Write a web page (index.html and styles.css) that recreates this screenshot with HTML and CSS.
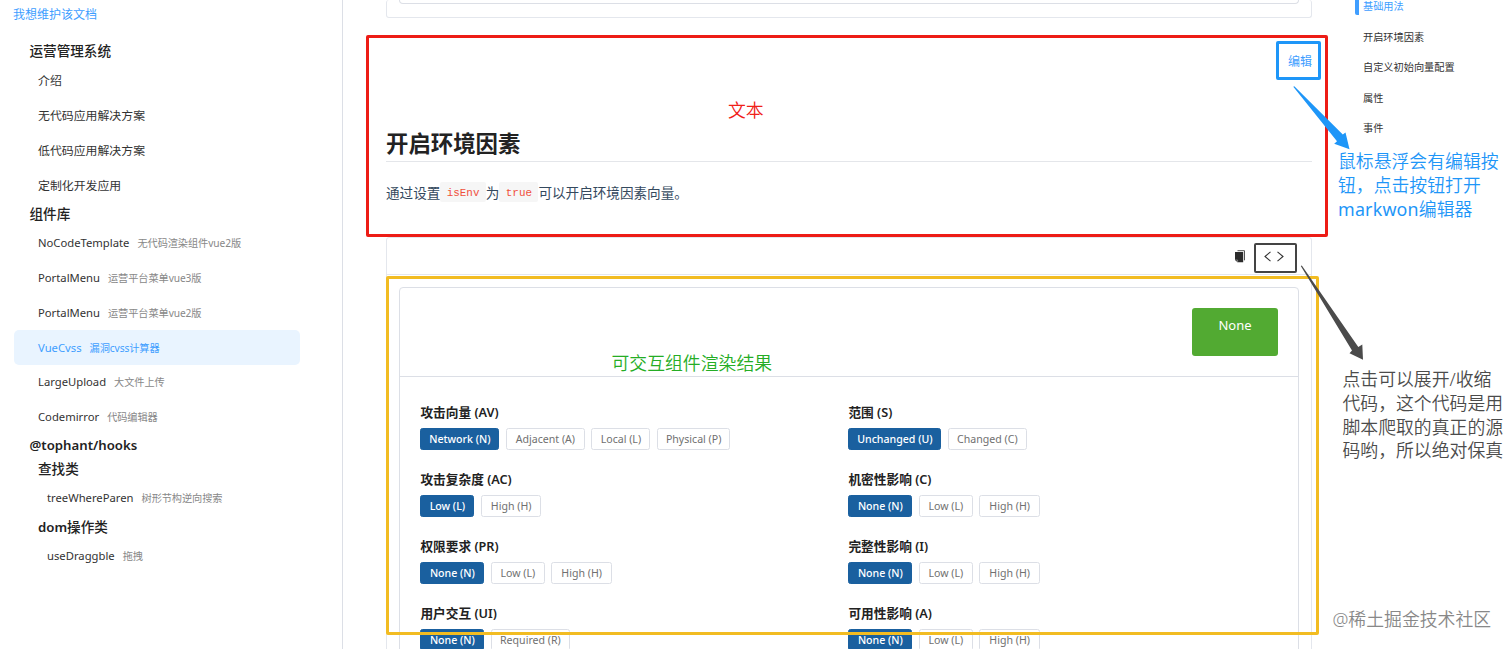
FILE: index.html
```html
<!DOCTYPE html>
<html lang="zh-CN">
<head>
    <meta charset="UTF-8">
    <meta name="viewport" content="width=device-width, initial-scale=1.0">
    <title>VueCvss 漏洞cvss计算器</title>
    <link rel="stylesheet" href="styles.css">
</head>
<body>
    <div class="layout">
        <aside class="sidebar">
            <a class="maintain">我想维护该文档</a>
            <nav class="menu">
                <div class="group">运营管理系统</div>
                <a class="item">介绍</a>
                <a class="item">无代码应用解决方案</a>
                <a class="item">低代码应用解决方案</a>
                <a class="item">定制化开发应用</a>
                <div class="group">组件库</div>
                <a class="item"><span class="name">NoCodeTemplate</span><small>无代码渲染组件vue2版</small></a>
                <a class="item"><span class="name">PortalMenu</span><small>运营平台菜单vue3版</small></a>
                <a class="item"><span class="name">PortalMenu</span><small>运营平台菜单vue2版</small></a>
                <a class="item active"><span class="name">VueCvss</span><small>漏洞cvss计算器</small></a>
                <a class="item"><span class="name">LargeUpload</span><small>大文件上传</small></a>
                <a class="item"><span class="name">Codemirror</span><small>代码编辑器</small></a>
                <div class="group latin">@tophant/hooks</div>
                <div class="group sub">查找类</div>
                <a class="item sub"><span class="name">treeWhereParen</span><small>树形节构逆向搜索</small></a>
                <div class="group sub"><span class="latin">dom</span>操作类</div>
                <a class="item sub"><span class="name">useDraggble</span><small>拖拽</small></a>
            </nav>
        </aside>

        <main class="content">
            <div class="demo demo-prev">
                <div class="prev-inner"></div>
            </div>

            <section class="doc">
                <a class="edit">编辑</a>
                <h2>开启环境因素</h2>
                <p>通过设置<code>isEnv</code>为<code>true</code>可以开启环境因素向量。</p>
            </section>

            <div class="demo">
                <div class="demo-bar">
                    <svg class="copy" width="12" height="13" viewBox="0 0 12 13">
                        <path d="M3.5 .7h7v9.6" fill="none" stroke="#555" stroke-width="1"/>
                        <path d="M1 2h8.2v10.3H3.6L1 10z" fill="#2b2b2b"/>
                        <path d="M1 10h2.6v2.3" fill="none" stroke="#999" stroke-width=".7"/>
                    </svg>
                    <svg class="code" width="20" height="11" viewBox="0 0 20 11">
                        <path d="M6.5 .8L1 5.5l5.5 4.7M13.5 .8L19 5.5l-5.5 4.7" fill="none" stroke="#333" stroke-width="1.1"/>
                    </svg>
                </div>
                <div class="cvss">
                    <div class="cvss-head">
                        <div class="score">None</div>
                    </div>
                    <div class="cvss-body">
                        <div class="metric">
                            <h4>攻击向量 (AV)</h4>
                            <div class="options"><button class="on w79">Network (N)</button><button class="w79">Adjacent (A)</button><button class="w59">Local (L)</button><button class="w73">Physical (P)</button></div>
                        </div>
                        <div class="metric">
                            <h4>范围 (S)</h4>
                            <div class="options"><button class="on w93">Unchanged (U)</button><button class="w79">Changed (C)</button></div>
                        </div>
                        <div class="metric">
                            <h4>攻击复杂度 (AC)</h4>
                            <div class="options"><button class="on w54">Low (L)</button><button class="w60">High (H)</button></div>
                        </div>
                        <div class="metric">
                            <h4>机密性影响 (C)</h4>
                            <div class="options"><button class="on w64">None (N)</button><button class="w54">Low (L)</button><button class="w60">High (H)</button></div>
                        </div>
                        <div class="metric">
                            <h4>权限要求 (PR)</h4>
                            <div class="options"><button class="on w64">None (N)</button><button class="w54">Low (L)</button><button class="w60">High (H)</button></div>
                        </div>
                        <div class="metric">
                            <h4>完整性影响 (I)</h4>
                            <div class="options"><button class="on w64">None (N)</button><button class="w54">Low (L)</button><button class="w60">High (H)</button></div>
                        </div>
                        <div class="metric">
                            <h4>用户交互 (UI)</h4>
                            <div class="options"><button class="on w64">None (N)</button><button class="w79">Required (R)</button></div>
                        </div>
                        <div class="metric">
                            <h4>可用性影响 (A)</h4>
                            <div class="options"><button class="on w64">None (N)</button><button class="w54">Low (L)</button><button class="w60">High (H)</button></div>
                        </div>
                    </div>
                </div>
            </div>
        </main>

        <nav class="toc">
            <a class="current">基础用法</a>
            <a>开启环境因素</a>
            <a>自定义初始向量配置</a>
            <a>属性</a>
            <a>事件</a>
        </nav>
    </div>

    <!-- annotations over the page -->
    <div class="mark mark-red"></div>
    <div class="mark mark-yellow"></div>
    <div class="mark mark-blue"></div>
    <div class="mark mark-dark"></div>
    <svg class="arrows" width="1512" height="649" viewBox="0 0 1512 649">
        <path d="M1293.3 86.8L1294.3 86.2L1342.8 134.6L1345.5 132.5L1349.5 149.3L1334.2 143.8L1337 141.2Z" fill="#1e96f8"/>
        <path d="M1300.8 266L1301.8 265.6L1358.3 347L1362.3 344.5L1363 359.8L1349.5 353.3L1352 350.5Z" fill="#4b4b4b"/>
    </svg>
    <div class="note note-red">文本</div>
    <div class="note note-green">可交互组件渲染结果</div>
    <div class="note note-blue">鼠标悬浮会有编辑按<br>钮，点击按钮打开<br><span class="wide">markwon</span>编辑器</div>
    <div class="note note-dark">点击可以展开/收缩<br>代码，这个代码是用<br>脚本爬取的真正的源<br>码哟，所以绝对保真</div>
    <div class="note watermark">@稀土掘金技术社区</div>
</body>
</html>
```
FILE: styles.css
```css
* {
    box-sizing: border-box;
}
body {
    margin: 0;
    height: 649px;
    overflow: hidden;
    position: relative;
    background: #fff;
    color: #333;
    font-family: "Noto Sans", "Noto Sans CJK SC", sans-serif;
    font-size: 12px;
}
.layout {
    display: flex;
    height: 649px;
    overflow: hidden;
}

/* left menu */
.sidebar {
    width: 343px;
    flex: none;
    border-right: 1px solid #dcdfe6;
    padding: 4px 42px 0 14px;
}
.maintain {
    display: block;
    height: 21px;
    line-height: 21px;
    margin-left: -1px;
    color: #409eff;
}
.menu {
    padding-top: 14.4px;
}
.group {
    height: 23px;
    line-height: 23px;
    padding-left: 15.5px;
    font-size: 13.6px;
    font-weight: 500;
    color: #222;
    white-space: nowrap;
}
.group.sub {
    padding-left: 24px;
}
.latin {
    font-size: 13.2px;
    font-weight: 600;
}
.item {
    display: flex;
    align-items: center;
    gap: 8px;
    height: 34.9px;
    padding-left: 24px;
    border-radius: 5px;
    color: #333;
    font-size: 11.9px;
    white-space: nowrap;
}
.item.sub {
    padding-left: 33px;
}
.item .name {
    font-size: 11.25px;
}
.item small {
    font-size: 10.2px;
    letter-spacing: -0.08px;
    color: #888;
}
.item.active {
    background: #e9f4ff;
}
.item.active,
.item.active small {
    color: #409eff;
}

/* document */
.content {
    width: 926px;
    margin-left: 43px;
    flex: none;
}
.demo {
    border: 1px solid #e4e7ed;
    border-radius: 3px;
    padding: 0 12px;
}
.demo-prev {
    height: 18px;
    border-top: 0;
}
.prev-inner {
    height: 4px;
    border: 1px solid #dcdfe6;
    border-top: 0;
    border-radius: 0 0 4px 4px;
}
.doc {
    height: 219px;
    padding-top: 33px;
    display: flex;
    flex-direction: column;
}
.edit {
    align-self: flex-end;
    height: 22px;
    line-height: 22px;
    color: #409eff;
}
.doc h2 {
    margin: 53px 0 0;
    height: 35.5px;
    line-height: 35px;
    border-bottom: 1px solid #e4e6ea;
    font-size: 22.4px;
    font-weight: 700;
    color: #222;
}
.doc p {
    margin: 19.5px 0 0;
    display: flex;
    align-items: center;
    height: 22px;
    font-size: 13.6px;
    color: #34495e;
}
.doc code {
    height: 20px;
    line-height: 22px;
    padding: 0 6.4px;
    border-radius: 2px;
    background: #f6f6f6;
    color: #f0503c;
    font-family: "Liberation Mono", monospace;
    font-size: 10.9px;
}
.demo-bar {
    display: flex;
    justify-content: flex-end;
    align-items: center;
    gap: 18px;
    height: 37px;
    margin: 0 -12px 12px;
    padding-right: 27px;
    border-bottom: 1px solid #e4e7ed;
}
.cvss {
    height: 400px;
    border: 1px solid #dcdfe6;
    border-radius: 4px;
}
.cvss-head {
    display: flex;
    justify-content: flex-end;
    height: 89px;
    padding: 20px 20px 0 0;
    border-bottom: 1px solid #dcdfe6;
}
.score {
    width: 86px;
    height: 48px;
    border-radius: 3px;
    background: #52aa32;
    color: #fff;
    font-size: 13px;
    line-height: 34px;
    text-align: center;
}
.cvss-body {
    display: grid;
    grid-template-columns: 428px 428px;
    grid-auto-rows: 67.15px;
    padding: 25px 20px 0 20.4px;
}
.metric h4 {
    margin: 0 0 5px;
    height: 21px;
    line-height: 21px;
    font-size: 12.7px;
    font-weight: 600;
    color: #222;
}
.options {
    display: flex;
    gap: 6.5px;
}
.options button {
    height: 21.5px;
    padding: 0;
    border: 1px solid #dcdfe6;
    border-radius: 2.5px;
    background: #fff;
    color: #707070;
    font-family: inherit;
    font-size: 10.6px;
    white-space: nowrap;
}
.options .on {
    border-color: #1a609f;
    background: #1a609f;
    color: #fff;
    font-weight: 500;
}
.w54 { width: 54px; }
.w59 { width: 59px; }
.w60 { width: 60.5px; }
.w64 { width: 64px; }
.w73 { width: 73.5px; }
.w79 { width: 79px; }
.w93 { width: 93px; }

/* page anchors */
.toc {
    margin-left: 43px;
    overflow: hidden;
}
.toc a {
    display: block;
    height: 17px;
    margin-bottom: 13.5px;
    padding-left: 4px;
    border-left: 4px solid transparent;
    line-height: 17px;
    font-size: 10.2px;
    color: #333;
    white-space: nowrap;
}
.toc .current {
    margin-top: -2px;
    border-left-color: #409eff;
    border-radius: 2px;
    color: #409eff;
}

/* annotations */
.mark {
    position: absolute;
    border: 2.5px solid;
    border-radius: 2px;
}
.mark-red {
    left: 366px;
    top: 35px;
    width: 962px;
    height: 202px;
    border: 3px solid #ed1c16;
}
.mark-yellow {
    left: 386px;
    top: 276px;
    width: 933px;
    height: 359px;
    border: 3px solid #f2bc22;
}
.mark-blue {
    left: 1276px;
    top: 41px;
    width: 45px;
    height: 39px;
    border: 3px solid #1e96f8;
}
.mark-dark {
    left: 1254px;
    top: 243px;
    width: 43px;
    height: 30px;
    border-color: #444;
}
.arrows {
    position: absolute;
    left: 0;
    top: 0;
}
.note {
    position: absolute;
    font-size: 17.85px;
    line-height: 23.8px;
    font-weight: 350;
    white-space: nowrap;
}
.note-red {
    left: 728px;
    top: 99px;
    color: #f02018;
}
.note-green {
    left: 611.5px;
    top: 352px;
    color: #25ad25;
}
.note-blue {
    left: 1338px;
    top: 150px;
    color: #1e96f8;
}
.wide {
    font-weight: 400;
    letter-spacing: 0.2px;
}
.note-dark {
    left: 1342.5px;
    top: 368px;
    color: #4b4b4b;
}
.watermark {
    left: 1332.5px;
    top: 608px;
    color: #888;
}
```
